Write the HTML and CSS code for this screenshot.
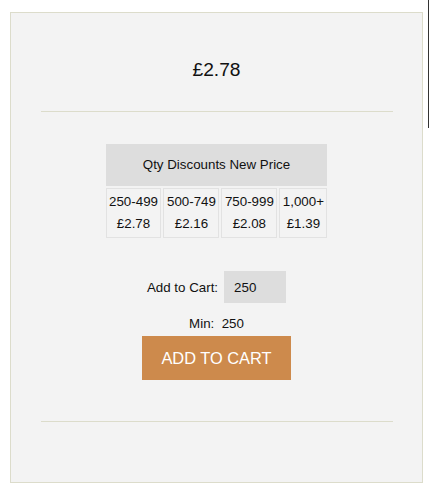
FILE: index.html
```html
<!DOCTYPE html>
<html>
<head>
<meta charset="utf-8">
<link rel="stylesheet" href="styles.css">
</head>
<body>
<div class="page">
  <div class="box">
    <div class="price">£2.78</div>
    <div class="rule"></div>
    <table class="discounts">
      <tr><th colspan="4">Qty Discounts New Price</th></tr>
      <tr>
        <td>250-499<br>£2.78</td>
        <td>500-749<br>£2.16</td>
        <td>750-999<br>£2.08</td>
        <td>1,000+<br>£1.39</td>
      </tr>
    </table>
    <div class="cart-row">
      <label class="cart-label" for="qty">Add to Cart:</label>
      <input class="qty" id="qty" type="text" value="250">
    </div>
    <div class="min">Min:&nbsp; 250</div>
    <button class="add-btn">ADD TO CART</button>
    <div class="rule rule-bottom"></div>
  </div>
</div>
<div class="scroll-edge"></div>
</body>
</html>
```

FILE: styles.css
```css
html, body {
  margin: 0;
  padding: 0;
  background: #ffffff;
}
body {
  font-family: "Liberation Sans", Arial, sans-serif;
  color: #111;
}
.page {
  padding: 12px 6px 12px 10px;
}
.box {
  width: 411px;
  height: 469px;
  border: 1px solid #dcdccb;
  background: #f3f3f3;
  display: flex;
  flex-direction: column;
  align-items: center;
}
.price {
  margin-top: 46px;
  font-size: 19.2px;
  line-height: 22px;
  height: 22px;
}
.rule {
  align-self: stretch;
  margin: 30px 29px 0 30px;
  height: 1px;
  background: #dcdccb;
}
.discounts {
  margin-top: 30px;
  border-spacing: 2px;
  font-size: 13.33px;
}
.discounts th {
  background: #dddddd;
  font-weight: normal;
  padding: 12px 6px;
  line-height: 18px;
}
.discounts td {
  border: 1px solid #e2e2e2;
  padding: 2px 2.5px;
  line-height: 22px;
  text-align: center;
}
.cart-row {
  margin-top: 31px;
  display: flex;
  align-items: center;
  font-size: 13.33px;
}
.cart-label {
  margin-right: 6px;
}
.qty {
  width: 62px;
  height: 32px;
  box-sizing: border-box;
  border: none;
  background: #dddddd;
  padding: 0 0 0 10px;
  margin: 0;
  font-family: "Liberation Sans", Arial, sans-serif;
  font-size: 13.33px;
  color: #111;
  outline: none;
}
.min {
  margin-top: 13px;
  font-size: 13.33px;
  line-height: 16px;
}
.add-btn {
  margin-top: 4px;
  width: 149px;
  height: 44px;
  border: none;
  background: #cd8a4c;
  color: #ffffff;
  font-family: "Liberation Sans", Arial, sans-serif;
  font-size: 16.4px;
  padding: 0;
}
.rule-bottom {
  margin-top: 41px;
}
.scroll-edge {
  position: absolute;
  left: 428px;
  top: 0;
  width: 1px;
  height: 128px;
  background: #333333;
}
```
